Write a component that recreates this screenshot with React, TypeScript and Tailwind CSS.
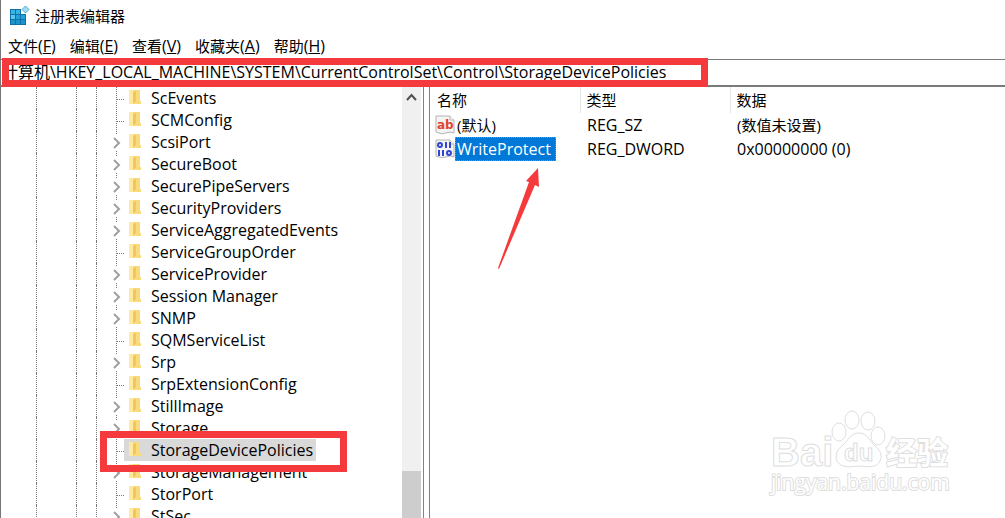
import React from "react";

type TreeKey = { name: string; expandable?: boolean; selected?: boolean };

const treeKeys: TreeKey[] = [
  { name: "ScEvents" },
  { name: "SCMConfig" },
  { name: "ScsiPort", expandable: true },
  { name: "SecureBoot", expandable: true },
  { name: "SecurePipeServers", expandable: true },
  { name: "SecurityProviders", expandable: true },
  { name: "ServiceAggregatedEvents", expandable: true },
  { name: "ServiceGroupOrder" },
  { name: "ServiceProvider", expandable: true },
  { name: "Session Manager", expandable: true },
  { name: "SNMP", expandable: true },
  { name: "SQMServiceList" },
  { name: "Srp", expandable: true },
  { name: "SrpExtensionConfig" },
  { name: "StillImage", expandable: true },
  { name: "Storage", expandable: true },
  { name: "StorageDevicePolicies", selected: true },
  { name: "StorageManagement", expandable: true },
  { name: "StorPort" },
  { name: "StSec", expandable: true },
];

const menus = [
  { label: "文件", hotkey: "F" },
  { label: "编辑", hotkey: "E" },
  { label: "查看", hotkey: "V" },
  { label: "收藏夹", hotkey: "A" },
  { label: "帮助", hotkey: "H" },
];

function RegeditIcon() {
  return (
    <svg width="22" height="22" viewBox="0 0 22 22" aria-hidden="true">
      <path d="M1 4H12V9H17V20H1Z" fill="#0e72a8" />
      <path d="M2 5H6V9H2ZM7 5H11V9H7Z" fill="#35b4e4" />
      <path d="M2 10H6V14H2Z" fill="#5cc8ee" />
      <path d="M7 10H11V14H7ZM12 10H16V14H12Z" fill="#22a2d8" />
      <path d="M2 15H6V19H2ZM7 15H11V19H7ZM12 15H16V19H12Z" fill="#1b93cc" />
      <path d="M16.500 1L20 4.500L16.500 8L13 4.500Z" fill="#a5dcf3" stroke="#4aa9d4" />
    </svg>
  );
}

function FolderIcon() {
  return (
    <svg width="15" height="20" viewBox="0 0 15 20" aria-hidden="true">
      <path d="M1 3H12V14H13V17H1Z" fill="#f9da7c" />
      <path d="M1 3H5L6 17H1Z" fill="#ffe99f" />
      <path d="M5 5V17L8 14V4Z" fill="#f0c660" />
    </svg>
  );
}

// Dotted connector in front of each key, with a chevron when it has subkeys
function Branch({ expandable }: { expandable?: boolean }) {
  return (
    <svg width="27" height="22" viewBox="0 0 27 22" className="shrink-0" aria-hidden="true">
      {expandable ? (
        <>
          <path d="M19.500 0V3M19.500 20V22" stroke="#777" strokeDasharray="1 1" />
          <path d="M17 7L22 12L17 17" fill="none" stroke="#a0a0a0" strokeWidth="2" />
        </>
      ) : (
        <path d="M19.500 0V22M20 12.500H28" stroke="#777" strokeDasharray="1 1" />
      )}
    </svg>
  );
}

function ValueIcon({ binary }: { binary?: boolean }) {
  return (
    <svg width="20" height="20" viewBox="0 0 20 20" className="shrink-0" aria-hidden="true">
      <path d="M1 1H15L19 5V18Q15 16 11 18T1 17Z" fill="#f4f4f4" stroke="#b4b4b4" />
      <path d="M15 1V5H19" fill="#fff" stroke="#b4b4b4" />
      {binary ? (
        <g fill="none" stroke="#3346d3" strokeWidth="2">
          <ellipse cx="5" cy="6" rx="2" ry="2" />
          <path d="M11 3V9M15 3V9M4 11V17M8 11V17" />
          <ellipse cx="14" cy="14" rx="2" ry="2" />
        </g>
      ) : (
        <text x="2" y="14" className="fill-[#e0472f] font-['DejaVu_Sans',sans-serif] text-[12px] font-bold">
          ab
        </text>
      )}
    </svg>
  );
}

function TreeRow({ item }: { item: TreeKey }) {
  return (
    <li className="flex h-[22px] items-stretch">
      <span className="w-9 shrink-0 border-r border-dotted border-[#777]" />
      <span className="w-10 shrink-0 border-r border-dotted border-[#777]" />
      <span className="w-5 shrink-0 border-r border-dotted border-[#777]" />
      <Branch expandable={item.expandable} />
      <button className={`flex items-start gap-2 pl-1 pr-[3px] ${item.selected ? "bg-[#d9d9d9]" : ""}`}>
        <FolderIcon />
        <span className="whitespace-nowrap text-base leading-[22px]">{item.name}</span>
      </button>
    </li>
  );
}

function Watermark() {
  return (
    <svg
      width="190"
      height="95"
      viewBox="0 0 190 95"
      className="pointer-events-none absolute bottom-[18px] right-[50px] fill-white stroke-[#dedede] stroke-1"
      aria-label="Baidu 经验"
    >
      <ellipse cx="74" cy="27" rx="7" ry="9" />
      <ellipse cx="87" cy="15" rx="7" ry="9" />
      <ellipse cx="103" cy="16" rx="7" ry="9" />
      <ellipse cx="113" cy="31" rx="7" ry="9" />
      <path d="M94 28C85 28 83 36 78 40C71 45 70 51 72 56C76 63 84 62 94 61C104 62 112 63 115 56C118 50 115 45 110 41C105 37 103 28 94 28Z" />
      <text x="6" y="61" className="font-['Liberation_Sans',sans-serif] text-[40px] font-bold">
        Bai
      </text>
      <text x="79" y="56" className="font-['Liberation_Sans',sans-serif] text-[24px] font-bold">
        du
      </text>
      <text x="121" y="59" className="font-['Noto_Sans_CJK_SC',sans-serif] text-[31px] font-bold [paint-order:stroke] stroke-2">
        经验
      </text>
      <text x="6" y="85" className="font-['Open_Sans',sans-serif] text-[21px] [paint-order:stroke] stroke-2">
        jingyan.baidu.com
      </text>
    </svg>
  );
}

export default function App() {
  return (
    <div className="relative flex h-screen flex-col overflow-hidden border-l border-[#777] bg-white font-['Open_Sans','Noto_Sans_CJK_SC',sans-serif] text-[15px] text-black">
      {/* Title bar */}
      <header className="flex h-8 shrink-0 items-center gap-1 pl-2">
        <RegeditIcon />
        <h1>注册表编辑器</h1>
      </header>

      {/* Menu */}
      <nav className="flex h-[27px] shrink-0 items-center gap-[14px] pl-[7px]">
        {menus.map((menu) => (
          <button key={menu.hotkey}>
            {menu.label}
            <span className="text-base">
              (<u>{menu.hotkey}</u>)
            </span>
          </button>
        ))}
      </nav>

      {/* Address bar */}
      <div className="relative h-7 shrink-0 border-b-2 border-t border-[#7a7a7a]">
        <input
          aria-label="地址"
          className="block h-[23px] w-full pl-px text-base outline-none"
          defaultValue="计算机\HKEY_LOCAL_MACHINE\SYSTEM\CurrentControlSet\Control\StorageDevicePolicies"
        />
        <div className="pointer-events-none absolute -top-[2px] left-px h-[29px] w-[706px] border-[7px] border-[#f43a3c]" />
      </div>

      <main className="flex min-h-0 grow">
        {/* Key tree */}
        <section className="relative flex w-[423px] shrink-0 border-r border-[#828282]">
          <ul className="grow overflow-hidden">
            {treeKeys.map((item) => (
              <TreeRow key={item.name} item={item} />
            ))}
          </ul>
          <div className="mr-[2px] flex w-[19px] flex-col justify-between bg-[#f0f0f0]">
            <svg width="19" height="20" viewBox="0 0 19 20" aria-hidden="true">
              <path d="M5 13L9.500 8L14 13" fill="none" stroke="#505050" strokeWidth="2" />
            </svg>
            <div className="h-[47px] bg-[#cdcdcd]" />
          </div>
          <div className="pointer-events-none absolute left-[99px] top-[344px] h-[41px] w-[247px] border-[7px] border-[#f43a3c]" />
        </section>

        {/* Values */}
        <section className="relative ml-[5px] grow border-l border-[#828282]">
          <table className="w-full table-fixed border-collapse text-left">
            <thead>
              <tr className="h-[26px]">
                <th className="w-[150px] border-r border-[#e5e5e5] pl-[7px] font-normal">名称</th>
                <th className="w-[150px] border-r border-[#e5e5e5] pl-[6px] font-normal">类型</th>
                <th className="pl-[6px] font-normal">数据</th>
              </tr>
            </thead>
            <tbody>
              <tr className="h-6">
                <td>
                  <div className="flex items-center pl-[5px]">
                    <ValueIcon />
                    <span className="px-[2px] leading-6">(默认)</span>
                  </div>
                </td>
                <td className="pl-[7px] text-base leading-6">REG_SZ</td>
                <td className="pl-[7px] leading-6">(数值未设置)</td>
              </tr>
              <tr className="h-6">
                <td>
                  <div className="flex items-center pl-[5px]">
                    <ValueIcon binary />
                    <span className="border border-dotted border-[#d08030] bg-[#0078d7] pl-px pr-1 text-base leading-[22px] text-white">
                      WriteProtect
                    </span>
                  </div>
                </td>
                <td className="pl-[7px] text-base leading-6">REG_DWORD</td>
                <td className="pl-[7px] text-base leading-6">0x00000000 (0)</td>
              </tr>
            </tbody>
          </table>
          <svg width="44" height="104" viewBox="0 0 44 104" className="absolute left-[68px] top-[80px]" aria-hidden="true">
            <path d="M40 1L28 14L31 15L0 101L1 102L37 18L41 20Z" fill="#f43a3c" />
          </svg>
        </section>
      </main>
      <Watermark />
    </div>
  );
}
